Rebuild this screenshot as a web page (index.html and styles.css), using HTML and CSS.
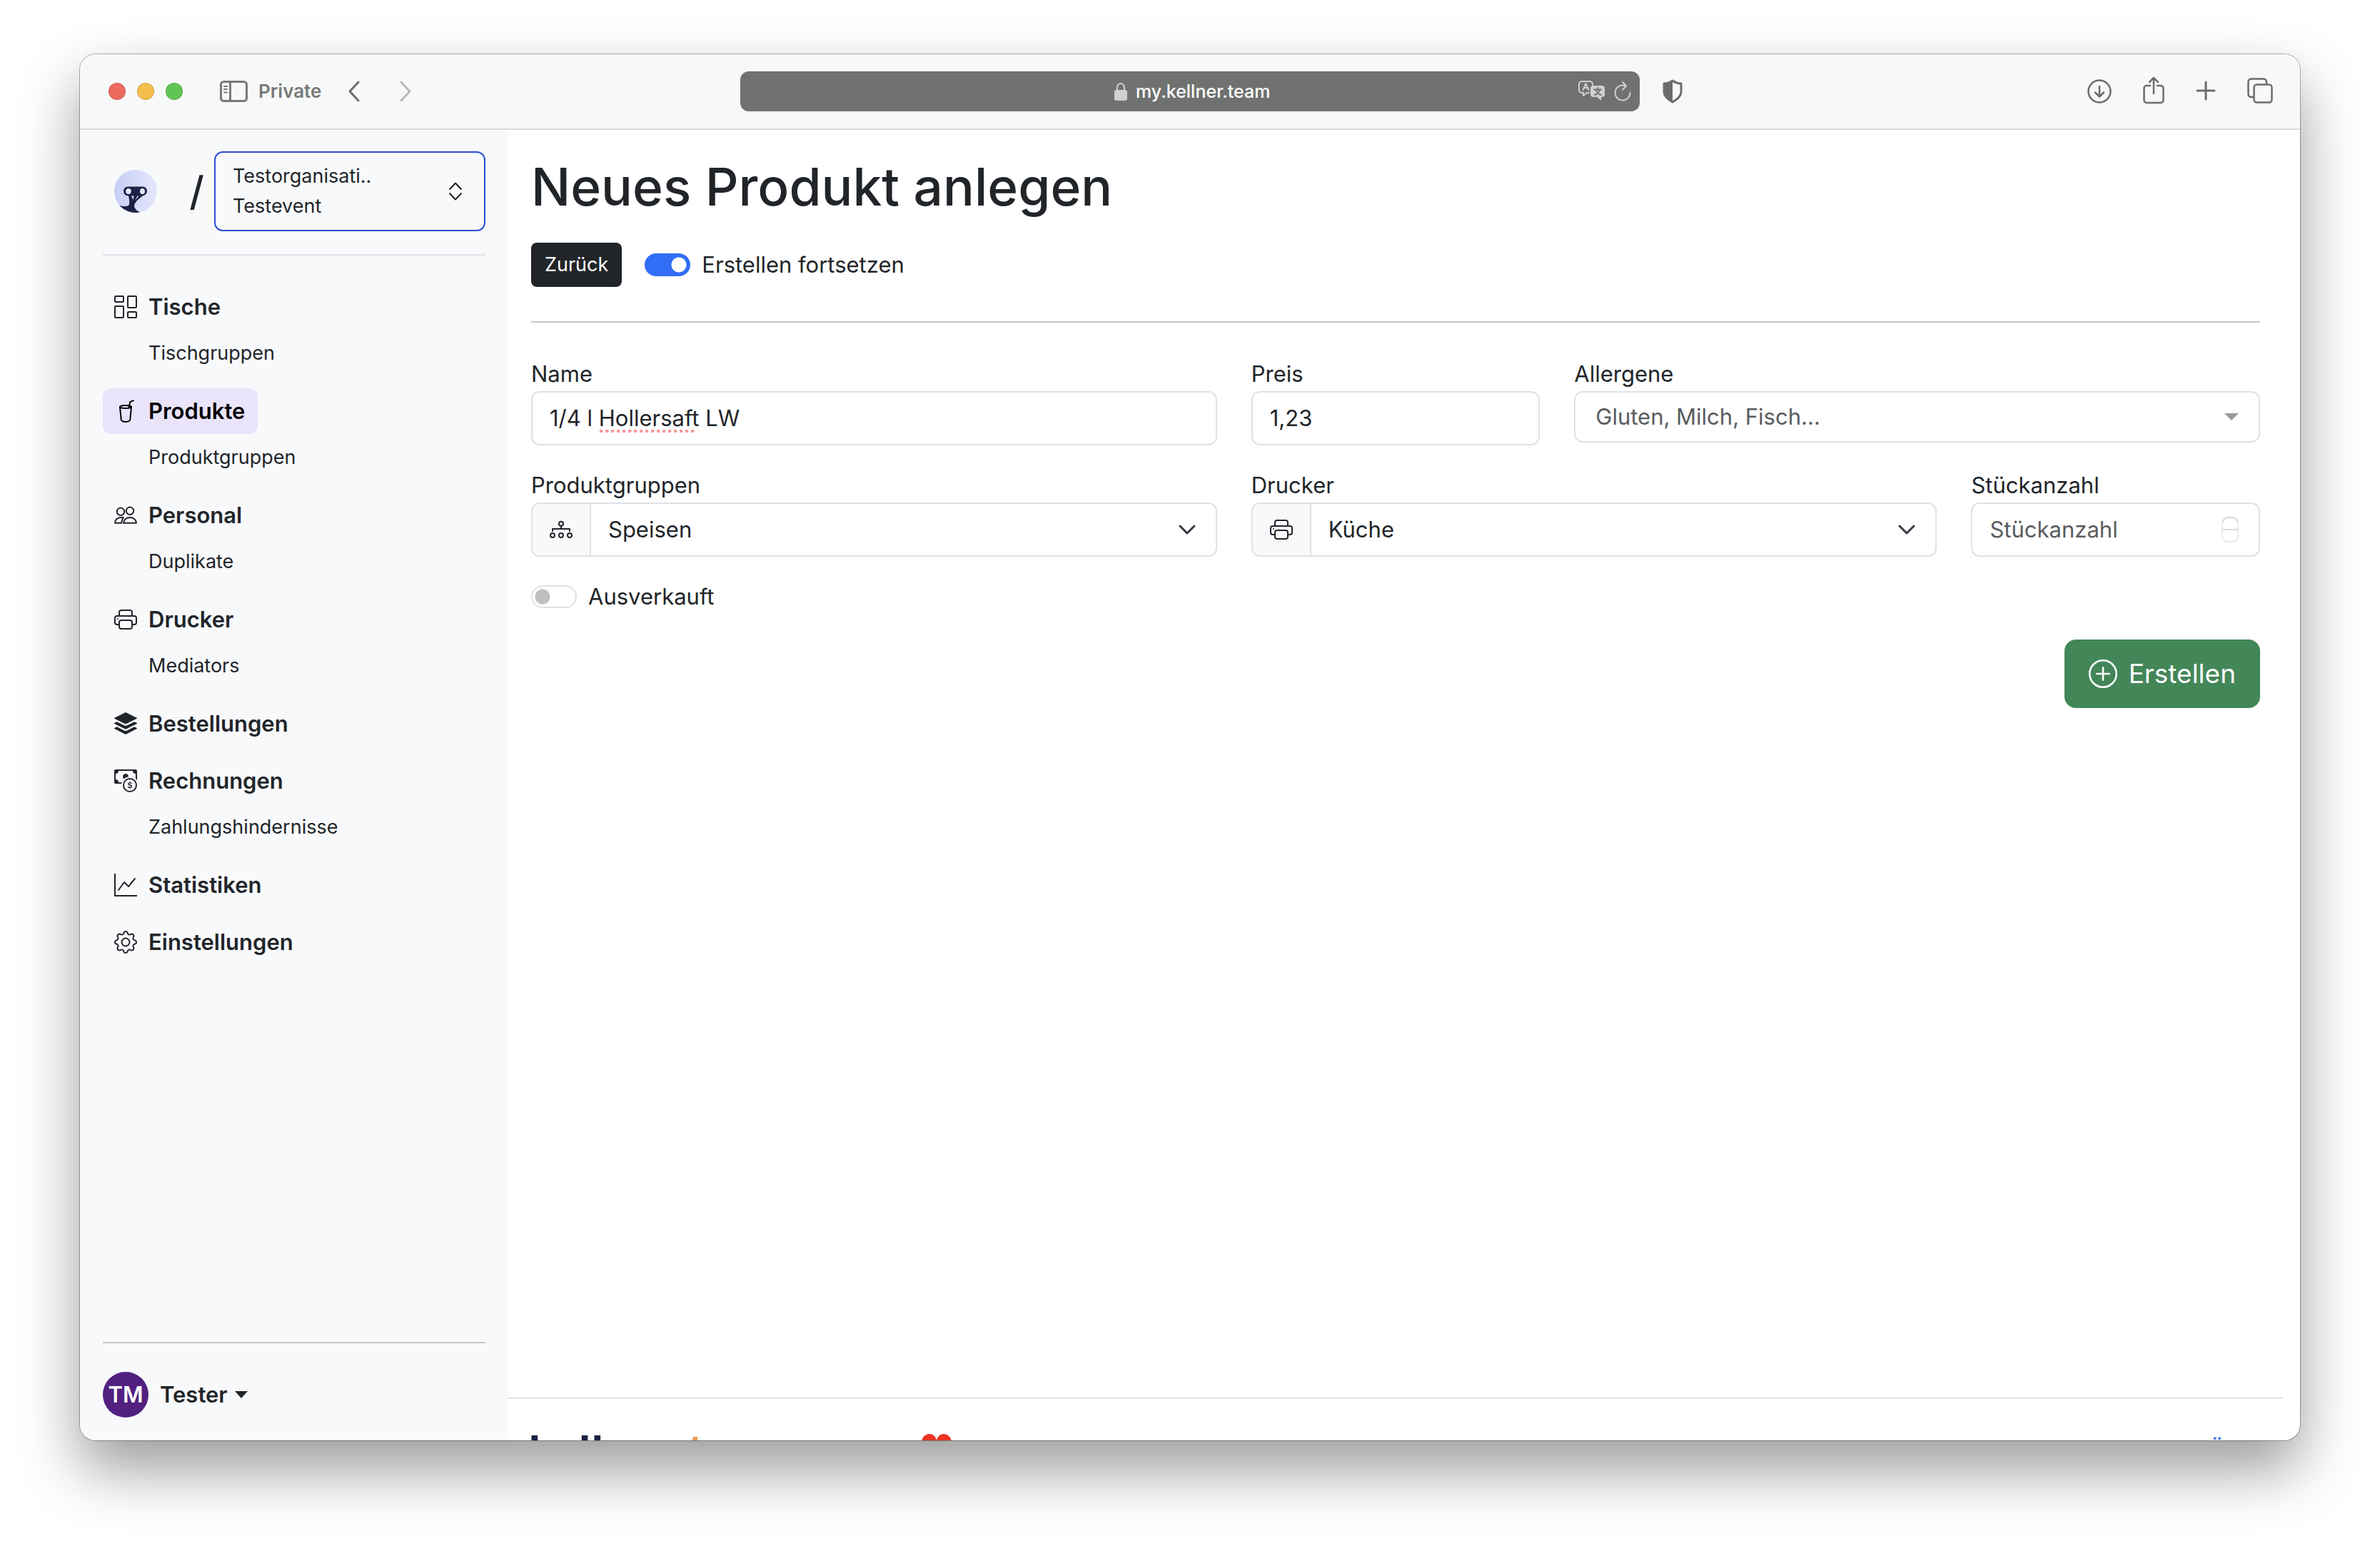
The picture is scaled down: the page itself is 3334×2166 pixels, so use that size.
FILE: index.html
```html
<!DOCTYPE html>
<html lang="de">
<head>
<meta charset="utf-8">
<meta name="viewport" content="width=device-width, initial-scale=1">
<title>Neues Produkt anlegen</title>
<link rel="stylesheet" href="styles.css">
</head>
<body>
<div class="window">
  <header class="toolbar">
    <div class="toolbar-left">
      <div class="lights">
        <button class="light light-red" aria-label="Schließen"></button>
        <button class="light light-yellow" aria-label="Minimieren"></button>
        <button class="light light-green" aria-label="Vollbild"></button>
      </div>
      <button class="tool private">
        <svg width="40" height="30" viewBox="0 0 40 30" fill="none" stroke="currentColor" stroke-width="3"><rect x="1.5" y="1.5" width="36" height="27" rx="4"/><path d="M14.500 2v26"/><path d="M6 8h4M6 12h4M6 16.500h4" stroke-width="2" stroke-linecap="round"/></svg>
        <span>Private</span>
      </button>
      <div class="history">
        <button class="tool" aria-label="Zurück"><svg width="16" height="30" viewBox="0 0 16 30" fill="none" stroke="currentColor" stroke-width="3" stroke-linecap="round" stroke-linejoin="round"><path d="M14 2 2 15l12 13"/></svg></button>
        <button class="tool tool-off" aria-label="Vorwärts"><svg width="16" height="30" viewBox="0 0 16 30" fill="none" stroke="currentColor" stroke-width="3" stroke-linecap="round" stroke-linejoin="round"><path d="m2 2 12 13L2 28"/></svg></button>
      </div>
    </div>
    <div class="address">
      <div class="address-main">
        <svg width="18" height="26" viewBox="0 0 18 26"><path d="M4 12V7.500a5 5.500 0 0 1 10 0V12" fill="none" stroke="#cfd0cf" stroke-width="2"/><rect y="11" width="18" height="15" rx="3" fill="#cfd0cf"/></svg>
        <input class="url" type="text" value="my.kellner.team" aria-label="Adresse">
      </div>
      <div class="address-actions">
        <button class="tool tool-light" aria-label="Übersetzen">
          <svg width="38" height="30" viewBox="0 0 38 30" fill="none" stroke="currentColor" stroke-width="2" stroke-linecap="round" stroke-linejoin="round"><path d="M15 17h-3l-5 4v-4H5a4 4 0 0 1-4-4V5a4 4 0 0 1 4-4h11a4 4 0 0 1 4 4v1"/><path d="m6.500 13 4-9 4 9M8 10h5"/><path d="M21 7h12a4 4 0 0 1 4 4v8a4 4 0 0 1-4 4h-1v5l-6-5h-5a4 4 0 0 1-4-4v-8a4 4 0 0 1 4-4z" fill="currentColor" stroke="none"/><path d="M22 12.500h10M27 10v2M30 13c-1 3-4 6-7 7M24.500 13c1 3 4 6 7 7" stroke="#6f7270"/></svg>
        </button>
        <button class="tool tool-light" aria-label="Neu laden">
          <svg width="24" height="30" viewBox="0 0 24 30" fill="none" stroke="currentColor" stroke-width="2" stroke-linecap="round" stroke-linejoin="round"><path d="M16.500 7.500A10.500 10.500 0 1 0 22.500 17"/><path d="m12 2 5 5.500-5 5"/></svg>
        </button>
      </div>
    </div>
    <div class="toolbar-right">
      <button class="tool" aria-label="Datenschutz">
        <svg width="28" height="34" viewBox="0 0 28 34"><path d="M14 2c4 3 8 4 12 4v12c0 6-5 10-12 14C7 28 2 24 2 18V6c4 0 8-1 12-4z" fill="none" stroke="currentColor" stroke-width="3" stroke-linejoin="round"/><path d="M14 2v30C7 28 2 24 2 18V6c4 0 8-1 12-4z" fill="currentColor"/></svg>
      </button>
      <div class="tools">
        <button class="tool" aria-label="Downloads"><svg width="34" height="34" viewBox="0 0 34 34" fill="none" stroke="currentColor" stroke-width="2.500" stroke-linecap="round" stroke-linejoin="round"><circle cx="17" cy="17" r="15.500"/><path d="M17 10v14.500M11 18.500l6 6 6-6"/></svg></button>
        <button class="tool" aria-label="Teilen"><svg width="30" height="42" viewBox="0 0 30 42" fill="none" stroke="currentColor" stroke-width="2.500" stroke-linecap="round" stroke-linejoin="round"><path d="M10 13H5a3.500 3.500 0 0 0-3.500 3.500v17A3.500 3.500 0 0 0 5 37h20a3.500 3.500 0 0 0 3.500-3.500v-17A3.500 3.500 0 0 0 25 13h-5"/><path d="M15 24V2M9 8l6-6 6 6"/></svg></button>
        <button class="tool" aria-label="Neuer Tab"><svg width="28" height="30" viewBox="0 0 28 30" fill="none" stroke="currentColor" stroke-width="3" stroke-linecap="round"><path d="M14 2v24M2 14h24"/></svg></button>
        <button class="tool" aria-label="Tabübersicht"><svg width="36" height="38" viewBox="0 0 36 38" fill="none" stroke="currentColor" stroke-width="2.500"><rect x="9.500" y="9.500" width="25" height="25" rx="4"/><path d="M9 27H5.500a4 4 0 0 1-4-4V5.500a4 4 0 0 1 4-4H23a4 4 0 0 1 4 4V9"/></svg></button>
      </div>
    </div>
  </header>

  <div class="app">
    <aside class="sidebar">
      <div class="org">
        <a class="brand" href="#" aria-label="Startseite">
          <svg width="60" height="60" viewBox="0 0 60 60"><defs><linearGradient id="sky"><stop offset="0" stop-color="#c6cef6"/><stop offset="1" stop-color="#e5e7fb"/></linearGradient><clipPath id="disc"><circle cx="30" cy="30" r="30"/></clipPath></defs><g clip-path="url(#disc)"><rect width="60" height="60" fill="url(#sky)"/><path fill="#1b2246" d="M19 23.500h21a6 6 0 0 1 6 6 6.500 6.500 0 0 1-6 6.800L33 42c-3 3-5 6-5 9 1 4 4 7 9 9l-1 2H22C14 60 6 54 5 49c5 2 12 3 15 1 2-2 1-7 1-9l-1-4.700a6.500 6.500 0 0 1-7-6.300 6 6 0 0 1 6-6.500z"/><ellipse cx="20" cy="30" rx="3.800" ry="4" fill="#e5e7fb"/><ellipse cx="39.500" cy="30" rx="3.500" ry="4" fill="#e5e7fb"/><path fill="#dfe2fa" d="m24 36.500 2.500 5.500 1-5.500zM34.500 36.500h-2L29 43z"/></g></svg>
        </a>
        <span class="slash">/</span>
        <button class="org-switch">
          <span class="org-name">Testorganisati..<br>Testevent</span>
          <svg width="20" height="26" viewBox="0 0 20 26" fill="none" stroke="currentColor" stroke-width="2" stroke-linecap="round" stroke-linejoin="round"><path d="m2 10 8-8.500L18 10M2 16l8 8.500L18 16"/></svg>
        </button>
      </div>
      <hr class="rule rule-light">
      <nav>
        <ul class="nav">
          <li>
            <a class="nav-item" href="#"><svg class="icon" viewBox="0 0 16 16"><path d="M6 1v3H1V1zM1 0a1 1 0 0 0-1 1v3a1 1 0 0 0 1 1h5a1 1 0 0 0 1-1V1a1 1 0 0 0-1-1zm14 12v3h-5v-3zm-5-1a1 1 0 0 0-1 1v3a1 1 0 0 0 1 1h5a1 1 0 0 0 1-1v-3a1 1 0 0 0-1-1zM6 8v7H1V8zM1 7a1 1 0 0 0-1 1v7a1 1 0 0 0 1 1h5a1 1 0 0 0 1-1V8a1 1 0 0 0-1-1zm14-6v7h-5V1zm-5-1a1 1 0 0 0-1 1v7a1 1 0 0 0 1 1h5a1 1 0 0 0 1-1V1a1 1 0 0 0-1-1z"/></svg>Tische</a>
            <a class="nav-sub" href="#">Tischgruppen</a>
          </li>
          <li>
            <a class="nav-item nav-active" href="#"><svg class="icon line" viewBox="0 0 16 16"><ellipse cx="8" cy="5" rx="4" ry="1"/><path d="m4 5 .9 9.200c.1.600 1.500 1.300 3.100 1.300s3-.700 3.100-1.300L12 5M10.300 5.500l.8-3.900L13.500.600"/></svg>Produkte</a>
            <a class="nav-sub" href="#">Produktgruppen</a>
          </li>
          <li>
            <a class="nav-item" href="#"><svg class="icon line" viewBox="0 0 16 16"><circle cx="4.500" cy="5.400" r="2.600"/><circle cx="11" cy="4.900" r="2.600"/><path d="M6.500 13.400c0-2.200 2-3.900 4.500-3.900s4.500 1.700 4.500 3.900zM6.300 9.500H4.500c-2.300 0-4 1.700-4 3.900h4.600c0-1.500.6-2.700 1.200-3.900z"/></svg>Personal</a>
            <a class="nav-sub" href="#">Duplikate</a>
          </li>
          <li>
            <a class="nav-item" href="#"><svg class="icon" viewBox="0 0 16 16"><path id="printer" d="M2.500 8a.5.5 0 1 0 0-1 .5.5 0 0 0 0 1M5 1a2 2 0 0 0-2 2v2H2a2 2 0 0 0-2 2v3a2 2 0 0 0 2 2h1v1a2 2 0 0 0 2 2h6a2 2 0 0 0 2-2v-1h1a2 2 0 0 0 2-2V7a2 2 0 0 0-2-2h-1V3a2 2 0 0 0-2-2zM4 3a1 1 0 0 1 1-1h6a1 1 0 0 1 1 1v2H4zm1 5a2 2 0 0 0-2 2v1H2a1 1 0 0 1-1-1V7a1 1 0 0 1 1-1h12a1 1 0 0 1 1 1v3a1 1 0 0 1-1 1h-1v-1a2 2 0 0 0-2-2zm7 2v3a1 1 0 0 1-1 1H5a1 1 0 0 1-1-1v-3a1 1 0 0 1 1-1h6a1 1 0 0 1 1 1"/></svg>Drucker</a>
            <a class="nav-sub" href="#">Mediators</a>
          </li>
          <li>
            <a class="nav-item" href="#"><svg class="icon" viewBox="0 0 16 16"><path d="m14.120 10.163 1.715.858c.22.11.22.424 0 .534L8.267 15.340a.6.6 0 0 1-.534 0L.165 11.555a.299.299 0 0 1 0-.534l1.716-.858 5.317 2.659c.505.252 1.100.252 1.604 0l5.317-2.660zM7.733.063a.6.6 0 0 1 .534 0l7.568 3.784a.3.3 0 0 1 0 .535L8.267 8.165a.6.6 0 0 1-.534 0L.165 4.382a.299.299 0 0 1 0-.535z"/><path d="m14.120 6.576 1.715.858c.22.11.22.424 0 .534l-7.568 3.784a.6.6 0 0 1-.534 0L.165 7.968a.299.299 0 0 1 0-.534l1.716-.858 5.317 2.659c.505.252 1.100.252 1.604 0z"/></svg>Bestellungen</a>
          </li>
          <li>
            <a class="nav-item" href="#"><svg class="icon" viewBox="0 0 16 16"><path fill-rule="evenodd" d="M11 15a4 4 0 1 0 0-8 4 4 0 0 0 0 8m5-4a5 5 0 1 1-10 0 5 5 0 0 1 10 0"/><path d="M9.438 11.944c.047.596.518 1.060 1.363 1.116v.44h.375v-.443c.875-.061 1.386-.529 1.386-1.207 0-.618-.39-.936-1.090-1.100l-.296-.07v-1.200c.376.043.614.248.671.532h.658c-.047-.575-.54-1.024-1.329-1.073V8.500h-.375v.45c-.747.073-1.255.522-1.255 1.158 0 .562.378.92 1.007 1.066l.248.061v1.272c-.384-.058-.639-.27-.696-.563h-.668zm1.360-1.354c-.369-.085-.569-.26-.569-.522 0-.294.216-.514.572-.578v1.100zm.432.746c.449.104.655.272.655.569 0 .339-.257.571-.709.614v-1.195z"/><path d="M1 0a1 1 0 0 0-1 1v8a1 1 0 0 0 1 1h4.083q.088-.517.258-1H3a2 2 0 0 0-2-2V3a2 2 0 0 0 2-2h10a2 2 0 0 0 2 2v3.528c.38.34.717.728 1 1.154V1a1 1 0 0 0-1-1z"/><path d="M9.998 5.083 10 5a2 2 0 1 0-3.132 1.650 6 6 0 0 1 3.130-1.567"/></svg>Rechnungen</a>
            <a class="nav-sub" href="#">Zahlungshindernisse</a>
          </li>
          <li>
            <a class="nav-item" href="#"><svg class="icon" viewBox="0 0 16 16"><path fill-rule="evenodd" d="M0 0h1v15h15v1H0zm14.817 3.113a.5.5 0 0 1 .07.704l-4.500 5.500a.5.5 0 0 1-.74.037L7.060 6.767l-3.656 5.027a.5.5 0 0 1-.808-.588l4-5.500a.5.5 0 0 1 .758-.06l2.609 2.610 4.150-5.073a.5.5 0 0 1 .704-.07"/></svg>Statistiken</a>
          </li>
          <li>
            <a class="nav-item" href="#"><svg class="icon" viewBox="0 0 16 16"><path d="M8 4.754a3.246 3.246 0 1 0 0 6.492 3.246 3.246 0 0 0 0-6.492M5.754 8a2.246 2.246 0 1 1 4.492 0 2.246 2.246 0 0 1-4.492 0"/><path d="M9.796 1.343c-.527-1.790-3.065-1.790-3.592 0l-.094.319a.873.873 0 0 1-1.255.52l-.292-.16c-1.640-.892-3.433.902-2.540 2.541l.159.292a.873.873 0 0 1-.52 1.255l-.319.094c-1.790.527-1.790 3.065 0 3.592l.319.094a.873.873 0 0 1 .52 1.255l-.16.292c-.892 1.640.901 3.434 2.541 2.540l.292-.159a.873.873 0 0 1 1.255.52l.094.319c.527 1.790 3.065 1.790 3.592 0l.094-.319a.873.873 0 0 1 1.255-.52l.292.16c1.640.893 3.434-.902 2.540-2.541l-.159-.292a.873.873 0 0 1 .52-1.255l.319-.094c1.790-.527 1.790-3.065 0-3.592l-.319-.094a.873.873 0 0 1-.52-1.255l.16-.292c.893-1.640-.902-3.433-2.541-2.540l-.292.159a.873.873 0 0 1-1.255-.52zm-2.633.283c.246-.835 1.428-.835 1.674 0l.094.319a1.873 1.873 0 0 0 2.693 1.115l.291-.16c.764-.415 1.600.42 1.184 1.185l-.159.292a1.873 1.873 0 0 0 1.116 2.692l.318.094c.835.246.835 1.428 0 1.674l-.319.094a1.873 1.873 0 0 0-1.115 2.693l.16.291c.415.764-.42 1.600-1.185 1.184l-.291-.159a1.873 1.873 0 0 0-2.693 1.116l-.094.318c-.246.835-1.428.835-1.674 0l-.094-.319a1.873 1.873 0 0 0-2.692-1.115l-.292.16c-.764.415-1.600-.42-1.184-1.185l.159-.291A1.873 1.873 0 0 0 1.945 8.930l-.319-.094c-.835-.246-.835-1.428 0-1.674l.319-.094A1.873 1.873 0 0 0 3.060 4.377l-.16-.292c-.415-.764.42-1.600 1.185-1.184l.292.159a1.873 1.873 0 0 0 2.692-1.115z"/></svg>Einstellungen</a>
          </li>
        </ul>
      </nav>
      <div class="account">
        <hr class="rule">
        <button class="user">
          <span class="avatar">TM</span>
          <span class="user-name">Tester</span>
          <svg width="18" height="10" viewBox="0 0 18 10"><path d="M0 0h18L9 10z" fill="currentColor"/></svg>
        </button>
      </div>
    </aside>

    <main class="main">
      <div class="content">
        <h1>Neues Produkt anlegen</h1>
        <div class="actions">
          <button class="btn-back">Zurück</button>
          <label class="check"><input class="switch" type="checkbox" checked>Erstellen fortsetzen</label>
        </div>
        <hr class="rule">
        <form class="form">
          <div class="row row-top">
            <div class="field">
              <label for="name">Name</label>
              <div class="control">
                <input id="name" type="text" value="1/4 l Hollersaft LW" spellcheck="false">
                <span class="spelling"></span>
              </div>
            </div>
            <div class="field">
              <label for="price">Preis</label>
              <div class="control"><input id="price" type="text" value="1,23"></div>
            </div>
            <div class="field">
              <label for="allergens">Allergene</label>
              <div class="control control-tags">
                <select id="allergens"><option>Gluten, Milch, Fisch...</option></select>
                <svg width="20" height="10" viewBox="0 0 20 10"><path d="M0 0h20L10 10z" fill="#999"/></svg>
              </div>
            </div>
          </div>
          <div class="row row-bottom">
            <div class="field">
              <label for="group">Produktgruppen</label>
              <div class="control">
                <span class="addon"><svg class="icon line" viewBox="0 0 16 16"><circle cx="8" cy="3.900" r="1.500"/><circle cx="2" cy="12" r="1.500"/><circle cx="8" cy="12" r="1.500"/><circle cx="14" cy="12" r="1.500"/><path d="M8 5.500v2M2 9V7.500h12V9"/></svg></span>
                <select id="group"><option>Speisen</option></select>
                <svg width="24" height="14" viewBox="0 0 24 14" fill="none" stroke="#343a40" stroke-width="3" stroke-linecap="round" stroke-linejoin="round"><path d="m2 2 10 10L22 2"/></svg>
              </div>
            </div>
            <div class="field">
              <label for="printer-select">Drucker</label>
              <div class="control">
                <span class="addon"><svg class="icon" viewBox="0 0 16 16"><use href="#printer"/></svg></span>
                <select id="printer-select"><option>Küche</option></select>
                <svg width="24" height="14" viewBox="0 0 24 14" fill="none" stroke="#343a40" stroke-width="3" stroke-linecap="round" stroke-linejoin="round"><path d="m2 2 10 10L22 2"/></svg>
              </div>
            </div>
            <div class="field">
              <label for="count">Stückanzahl</label>
              <div class="control">
                <input id="count" type="number" placeholder="Stückanzahl">
                <svg width="24" height="36" viewBox="0 0 24 36" fill="none"><rect x="1" y="1" width="22" height="34" rx="8" stroke="#e4e4e4" stroke-width="1.500"/><path d="M2 7c1-4 3-6 7-6h6c4 0 6 2 7 6M1 18h22" stroke="#cfcfcf" stroke-width="1.500"/></svg>
              </div>
            </div>
          </div>
          <label class="check"><input class="switch" type="checkbox">Ausverkauft</label>
          <button class="btn-create" type="submit">
            <svg width="40" height="40" viewBox="0 0 16 16" fill="none" stroke="currentColor" stroke-linecap="round"><circle cx="8" cy="8" r="7.500"/><path d="M8 4.500v7M4.500 8h7"/></svg>
            Erstellen
          </button>
        </form>
      </div>
      <footer class="footer">
        <div class="footer-row">
          <span class="wordmark">kellner<span class="wordmark-tld">.team</span></span>
          <svg width="42" height="46" viewBox="0 0 42 44" preserveAspectRatio="none"><path d="M21 44C8 34 0 24 0 12 0 5 5 0 11 0c5 0 8 3 10 8 2-5 5-8 10-8 6 0 11 5 11 12 0 12-8 22-21 32z" fill="#eb3323"/></svg>
          <a class="footer-link" href="#">Über</a>
        </div>
      </footer>
    </main>
  </div>
</div>
</body>
</html>
```
FILE: styles.css
```css
* {
  box-sizing: border-box;
}

body {
  margin: 0;
  height: 100vh;
  padding: 76px 112px 148px;
  display: flex;
  background: #fff;
  color: #212529;
  font: 400 31px/48px Inter, "Liberation Sans", sans-serif;
}

button,
input,
select {
  margin: 0;
  padding: 0;
  border: 0;
  background: none;
  color: inherit;
  font: inherit;
}

svg {
  display: block;
  flex: none;
}

a {
  color: inherit;
  text-decoration: none;
}

/* Browser window */

.window {
  flex: 1;
  min-width: 0;
  display: flex;
  flex-direction: column;
  overflow: hidden;
  border-radius: 22px;
  background: #fff;
  box-shadow: 0 0 0 1px rgba(0, 0, 0, .3), 0 40px 84px rgba(0, 0, 0, .4);
}

.toolbar {
  flex: none;
  display: grid;
  grid-template-columns: 1fr minmax(0, 1260px) 1fr;
  align-items: center;
  padding: 24px 0;
  border-bottom: 2px solid #d9dbda;
  background: #f7f9f8;
  color: #6b6d6c;
}

.toolbar-left {
  display: flex;
  align-items: center;
  padding-left: 40px;
}

.lights {
  display: flex;
  gap: 16px;
  margin-right: 52px;
}

.light {
  width: 24px;
  height: 24px;
  border: 1px solid rgba(0, 0, 0, .12);
  border-radius: 50%;
}

.light-red {
  background: #ec6a5e;
}

.light-yellow {
  background: #f4bf4f;
}

.light-green {
  background: #61c554;
}

.tool {
  display: flex;
  align-items: center;
}

.tool-off {
  color: #b7b9b8;
}

.tool-light {
  color: #cfd0cf;
}

.private {
  gap: 14px;
  color: #777978;
  font-size: 26px;
  font-weight: 600;
}

.history {
  display: flex;
  gap: 56px;
  margin-left: 38px;
}

.address {
  height: 56px;
  display: grid;
  grid-template-columns: 1fr auto 1fr;
  align-items: center;
  border-radius: 12px;
  background: #6f7270;
  color: #fff;
}

.address-main {
  grid-column: 2;
  display: flex;
  align-items: center;
  gap: 12px;
  padding-left: 10px;
}

.url {
  width: 192px;
  font-size: 25px;
  font-weight: 500;
  outline: 0;
}

.address-actions {
  justify-self: end;
  display: flex;
  gap: 12px;
  padding-right: 12px;
}

.toolbar-right {
  display: flex;
  align-items: center;
  justify-content: space-between;
  padding: 0 38px 0 32px;
}

.tools {
  display: flex;
  align-items: center;
  gap: 44px;
}

/* App shell */

.app {
  flex: 1;
  min-height: 0;
  display: flex;
}

.rule {
  width: 100%;
  height: 2px;
  margin: 0;
  border: 0;
  background: #c6c8ca;
}

.rule-light {
  background: #dfe2e7;
}

.icon {
  width: 32px;
  height: 32px;
  fill: currentColor;
}

.line {
  fill: none;
  stroke: currentColor;
  stroke-linecap: round;
  stroke-linejoin: round;
}

.sidebar {
  flex: none;
  width: 600px;
  display: flex;
  flex-direction: column;
  padding: 30px 32px 32px;
  background: #f8f9fb;
}

.org {
  display: grid;
  grid-template-columns: 60px 1fr 380px;
  align-items: center;
  padding-left: 16px;
  margin-bottom: 32px;
}

.slash {
  justify-self: end;
  padding-right: 14px;
  font-size: 56px;
  font-weight: 500;
}

.org-switch {
  display: flex;
  align-items: center;
  justify-content: space-between;
  padding: 12px 30px 12px 24px;
  border: 2px solid #2b50d4;
  border-radius: 12px;
  font-size: 27px;
  line-height: 42px;
  text-align: left;
}

.nav {
  display: flex;
  flex-direction: column;
  gap: 16px;
  margin: 40px 0 0;
  padding: 0;
  list-style: none;
}

.nav-item {
  display: flex;
  align-items: center;
  gap: 16px;
  width: fit-content;
  height: 64px;
  padding: 0 18px 0 16px;
  border-radius: 12px;
  font-weight: 600;
}

.nav-active {
  background: #e9e4fa;
  color: #000;
}

.nav-sub {
  display: block;
  padding: 12px 0 12px 64px;
  font-size: 27px;
  line-height: 42px;
}

.account {
  margin-top: auto;
}

.user {
  display: flex;
  align-items: center;
  margin-top: 40px;
  font-weight: 600;
}

.avatar {
  width: 64px;
  height: 64px;
  border-radius: 50%;
  background: #512080;
  color: #fff;
  line-height: 64px;
  text-align: center;
}

.user-name {
  margin: 0 10px 0 16px;
}

/* Page */

.main {
  flex: 1;
  min-width: 0;
  display: flex;
  flex-direction: column;
  padding-right: 24px;
}

.content {
  flex: 1;
  min-height: 0;
  padding: 32px;
}

h1 {
  margin: 0 0 30px;
  font-size: 73px;
  font-weight: 500;
  line-height: 96px;
}

.actions {
  display: flex;
  align-items: center;
  gap: 32px;
  margin-bottom: 48px;
}

.btn-back {
  padding: 10px 19px;
  border-radius: 8px;
  background: #212529;
  color: #fff;
  font-size: 27px;
  line-height: 42px;
}

.check {
  display: flex;
  align-items: center;
  gap: 16px;
  width: fit-content;
}

.switch {
  appearance: none;
  width: 64px;
  height: 32px;
  border: 2px solid #dee2e6;
  border-radius: 16px;
  background: radial-gradient(circle at 14px 14px, #bfbfbf 10px, transparent 11px);
}

.switch:checked {
  border-color: #316df5;
  background: radial-gradient(circle at 48px 16px, #fff 10px, #316df5 11px) border-box;
}

.form {
  display: flex;
  flex-direction: column;
  gap: 32px;
  padding-top: 48px;
}

.row {
  display: grid;
  gap: 48px;
  align-items: start;
}

.row-top {
  grid-template-columns: 19fr 8fr 19fr;
}

.row-bottom {
  grid-template-columns: 19fr 19fr 8fr;
}

.field {
  min-width: 0;
  display: flex;
  flex-direction: column;
}

.control {
  position: relative;
  display: flex;
  align-items: center;
  height: 76px;
  overflow: hidden;
  border: 2px solid #dee2e6;
  border-radius: 12px;
}

.control input,
.control select {
  flex: 1;
  min-width: 0;
  align-self: stretch;
  padding: 0 24px;
  appearance: none;
  outline: 0;
}

.control > svg {
  margin-right: 28px;
  pointer-events: none;
}

.control-tags {
  height: 72px;
}

.control-tags select {
  padding: 0 28px;
}

.control-tags select,
.control input::placeholder {
  color: #595c5f;
  opacity: 1;
}

.control input::-webkit-inner-spin-button {
  display: none;
}

.addon {
  align-self: stretch;
  display: flex;
  align-items: center;
  padding: 0 24px;
  border-right: 2px solid #dee2e6;
  background: #f8f9fb;
}

/* Dotted spell-check mark under the misspelt word */
.spelling {
  position: absolute;
  left: 94px;
  top: 52px;
  width: 136px;
  height: 4px;
  background: radial-gradient(circle at 2px 2px, #f59a9a 2px, transparent 3px) 0 0 / 8px 4px;
}

.btn-create {
  align-self: flex-end;
  display: flex;
  align-items: center;
  gap: 16px;
  height: 96px;
  margin-top: 4px;
  padding: 0 34px;
  border-radius: 16px;
  background: #438658;
  color: #fff;
  font-size: 37px;
}

/* Only the top edge of the footer is in view */
.footer {
  flex: none;
  height: 60px;
  overflow: hidden;
  padding: 42px 32px 0 28px;
  border-top: 2px solid #dee2e6;
}

.footer-row {
  display: flex;
  align-items: center;
}

.wordmark {
  flex: none;
  width: 551px;
  color: #1b2246;
  font: 700 58px/58px "Open Sans", sans-serif;
}

.wordmark-tld {
  color: #ef9f56;
  font-size: 62px;
}

.footer-link {
  margin-left: auto;
  color: #316df5;
}
```
